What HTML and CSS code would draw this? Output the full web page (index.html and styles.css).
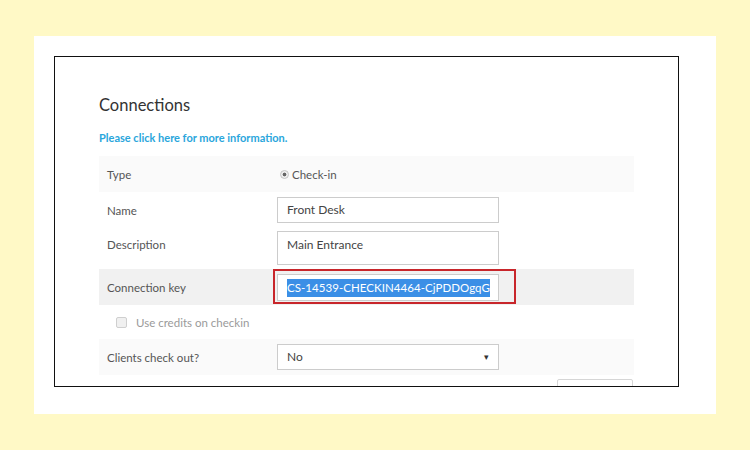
FILE: index.html
```html
<!DOCTYPE html>
<html lang="en">

<head>
    <meta charset="utf-8">
    <title>Connections</title>
    <link rel="stylesheet" href="styles.css">
</head>

<body>
    <div class="panel">
        <div class="frame">
            <h1 class="title">Connections</h1>
            <a class="info-link" href="#">Please click here for more information.</a>

            <div class="form">
                <div class="row row-shaded">
                    <label>Type</label>
                    <div class="radio-field">
                        <span class="radio"></span>
                        <span>Check-in</span>
                    </div>
                </div>

                <div class="row">
                    <label>Name</label>
                    <div class="field">Front Desk</div>
                </div>

                <div class="row row-top">
                    <label>Description</label>
                    <div class="field field-tall">Main Entrance</div>
                </div>

                <div class="row row-key">
                    <label>Connection key</label>
                    <div class="field field-key"><span class="selected">CS-14539-CHECKIN4464-CjPDDOgqG</span></div>
                    <div class="highlight-box"></div>
                </div>

                <div class="row row-check">
                    <span class="checkbox"></span>
                    <span class="check-label">Use credits on checkin</span>
                </div>

                <div class="row row-shaded">
                    <label>Clients check out?</label>
                    <div class="field field-select">
                        <span>No</span>
                        <span class="arrow">&#9662;</span>
                    </div>
                </div>

                <div class="actions">
                    <button class="save-btn"></button>
                </div>
            </div>
        </div>
    </div>
</body>

</html>
```

FILE: styles.css
```css
:root {
    --color-page: #fff9c6;
    --color-text: #333333;
    --color-label: #555555;
    --color-muted: #9a9a9a;
    --color-link: #2aa6dc;
    --color-border: #cccccc;
    --color-shade: #fafafa;
    --color-key: #f1f1f1;
    --color-red: #c8262b;
    --color-select: #3b8fe6;
}

body {
    margin: 0;
    background: var(--color-page);
    font-family: Lato, "Open Sans", sans-serif;
    color: var(--color-text);
}

.panel {
    width: 642px;
    height: 338px;
    margin: 36px 0 0 34px;
    padding: 20px;
    background: #ffffff;
}

.frame {
    box-sizing: border-box;
    width: 625px;
    height: 331px;
    padding: 38px 0 0 44px;
    border: 1.5px solid #111111;
    overflow: hidden;
}

.title {
    margin: 0;
    font-size: 16.5px;
    font-weight: 400;
    line-height: 20px;
    color: var(--color-text);
}

.info-link {
    display: block;
    margin-top: 16px;
    font-size: 11px;
    font-weight: 700;
    line-height: 14px;
    color: var(--color-link);
    text-decoration: none;
}

.form {
    width: 535px;
    margin-top: 11px;
}

.row {
    position: relative;
    display: grid;
    grid-template-columns: 178px 222px;
    align-items: center;
    min-height: 36px;
}

.row label {
    padding-left: 8px;
    font-size: 11.5px;
    color: var(--color-label);
}

.row-shaded {
    background: var(--color-shade);
}

.row-top {
    align-items: start;
    min-height: 0;
    padding: 3px 0 4px;
}

.row-top label {
    padding-top: 7px;
}

.row-key {
    background: var(--color-key);
}

.radio-field {
    display: flex;
    align-items: center;
    gap: 3px;
    padding-left: 3px;
    font-size: 11.5px;
    color: var(--color-label);
}

.radio {
    box-sizing: border-box;
    width: 9px;
    height: 9px;
    border: 1px solid #c4c4c4;
    border-radius: 50%;
    background: radial-gradient(circle, #666666 0 1.6px, #eeeeee 2.2px);
}

.field {
    box-sizing: border-box;
    height: 26px;
    padding: 0 9px;
    border: 1px solid var(--color-border);
    background: #ffffff;
    font-size: 12px;
    line-height: 24px;
    color: #444444;
    white-space: nowrap;
    overflow: hidden;
}

.field-tall {
    height: 34px;
    padding-top: 1px;
}

.field-key {
    height: 27px;
    padding-right: 4px;
    line-height: 25px;
    font-size: 11.5px;
    letter-spacing: 0.05px;
}

.selected {
    padding: 2px 0 3px;
    background: var(--color-select);
    color: #ffffff;
}

.highlight-box {
    position: absolute;
    left: 174px;
    top: 0;
    width: 243px;
    height: 35px;
    box-sizing: border-box;
    border: 2px solid var(--color-red);
}

.row-check {
    display: flex;
    gap: 9px;
    min-height: 34px;
    padding-left: 17px;
}

.checkbox {
    box-sizing: border-box;
    width: 11px;
    height: 11px;
    border: 1px solid #cfcfcf;
    border-radius: 2px;
    background: #f0f0f0;
}

.check-label {
    font-size: 11.5px;
    color: var(--color-muted);
}

.field-select {
    display: flex;
    justify-content: space-between;
}

.arrow {
    font-size: 9px;
    color: #333333;
}

.actions {
    display: flex;
    justify-content: flex-end;
    padding: 4px 1px 0 0;
}

.save-btn {
    width: 76px;
    height: 28px;
    border: 1px solid #d6d6d6;
    border-radius: 2px;
    background: #ffffff;
}
```
